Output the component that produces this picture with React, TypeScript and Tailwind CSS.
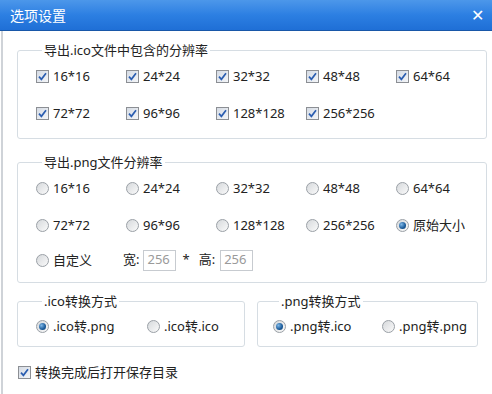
import React from 'react';

const FONT = { fontFamily: '"Noto Sans", "Noto Sans CJK SC", sans-serif' };

function CheckBox() {
  return (
    <span className="w-[13px] h-[13px] shrink-0 border border-[#8c8f94] bg-gradient-to-br from-[#d5dbe4] to-[#f4f6f9] flex items-center justify-center">
      <svg width="9" height="9" viewBox="0 0 9 9">
        <path d="M1 4.6 L3.4 7.3 L8 1.2" fill="none" stroke="#2a5db0" strokeWidth="1.7" />
      </svg>
    </span>
  );
}

function Radio({ on }: { on?: boolean }) {
  return (
    <span className="w-[13px] h-[13px] shrink-0 rounded-full border border-[#9aa0a6] bg-gradient-to-br from-[#d6d9dc] to-[#fafafa] flex items-center justify-center">
      {on && <span className="w-[7px] h-[7px] rounded-full bg-[radial-gradient(circle_at_35%_35%,#7fb8e8,#1a5a99_60%,#0f3f70)]" />}
    </span>
  );
}

function Item({ label, kind, on, className }: { label: string; kind: 'check' | 'radio'; on?: boolean; className?: string }) {
  return (
    <div className={`flex items-center gap-1 h-5 ${className ?? ''}`}>
      {kind === 'check' ? <CheckBox /> : <Radio on={on} />}
      <span className="text-[13px] leading-5 text-[#222]">{label}</span>
    </div>
  );
}

function Group({ title, className, children }: { title: string; className?: string; children: React.ReactNode }) {
  return (
    <fieldset className={`border border-[#d6dde3] rounded-[3px] ${className ?? ''}`}>
      <legend className="ml-[6px] px-[2px] text-[13px] leading-[18px] text-[#222]">{title}</legend>
      {children}
    </fieldset>
  );
}

export default function App() {
  const ico = ['16*16', '24*24', '32*32', '48*48', '64*64', '72*72', '96*96', '128*128', '256*256'];
  const png = ['16*16', '24*24', '32*32', '48*48', '64*64', '72*72', '96*96', '128*128', '256*256'];

  return (
    <div className="w-[492px] h-[394px] bg-white flex flex-col overflow-hidden" style={FONT}>
      {/* 标题栏 */}
      <div className="h-[31px] shrink-0 bg-gradient-to-b from-[#4c97ea] via-[#2c7fe2] to-[#1f6fd6] border-b border-[#1857a8] flex items-center justify-between pl-[10px] pr-[8px]">
        <span className="text-white text-[14px]">选项设置</span>
        <span className="text-white text-[16px] leading-none">✕</span>
      </div>

      <div className="flex-1 border-l-2 border-[#cfd3d8] ml-[1px] pl-[14px] pr-[12px] pt-[10px]">
        <Group title="导出.ico文件中包含的分辨率" className="pl-[18px] pt-[7px] pb-[15px]">
          <div className="grid grid-cols-[repeat(5,90px)] gap-y-[17px]">
            {ico.map(s => <Item key={s} label={s} kind="check" />)}
          </div>
        </Group>

        <Group title="导出.png文件分辨率" className="mt-[14px] pl-[18px] pt-[7px] pb-[12px]">
          <div className="grid grid-cols-[repeat(5,90px)] gap-y-[17px]">
            {png.map(s => <Item key={s} label={s} kind="radio" />)}
            <Item label="原始大小" kind="radio" on />
          </div>
          <div className="flex items-center h-5 mt-[15px] text-[13px] text-[#222]">
            <Item label="自定义" kind="radio" className="w-[87px]" />
            <span>宽:</span>
            <span className="ml-[4px] w-[33px] h-[21px] border border-[#c7cbd0] text-[#9a9a9a] flex items-center pl-[3px]">256</span>
            <span className="ml-[6px]">*</span>
            <span className="ml-[9px]">高:</span>
            <span className="ml-[5px] w-[33px] h-[21px] border border-[#c7cbd0] text-[#9a9a9a] flex items-center pl-[3px]">256</span>
          </div>
        </Group>

        <div className="flex gap-[12px] mt-[9px]">
          <Group title=".ico转换方式" className="w-[228px] pl-[18px] pt-[6px] pb-[10px]">
            <div className="flex">
              <Item label=".ico转.png" kind="radio" on className="w-[111px]" />
              <Item label=".ico转.ico" kind="radio" />
            </div>
          </Group>
          <Group title=".png转换方式" className="w-[221px] pl-[15px] pt-[6px] pb-[10px]">
            <div className="flex">
              <Item label=".png转.ico" kind="radio" on className="w-[109px]" />
              <Item label=".png转.png" kind="radio" />
            </div>
          </Group>
        </div>

        <div className="mt-[15px] ml-[1px]">
          <Item label="转换完成后打开保存目录" kind="check" />
        </div>
      </div>
    </div>
  );
}
